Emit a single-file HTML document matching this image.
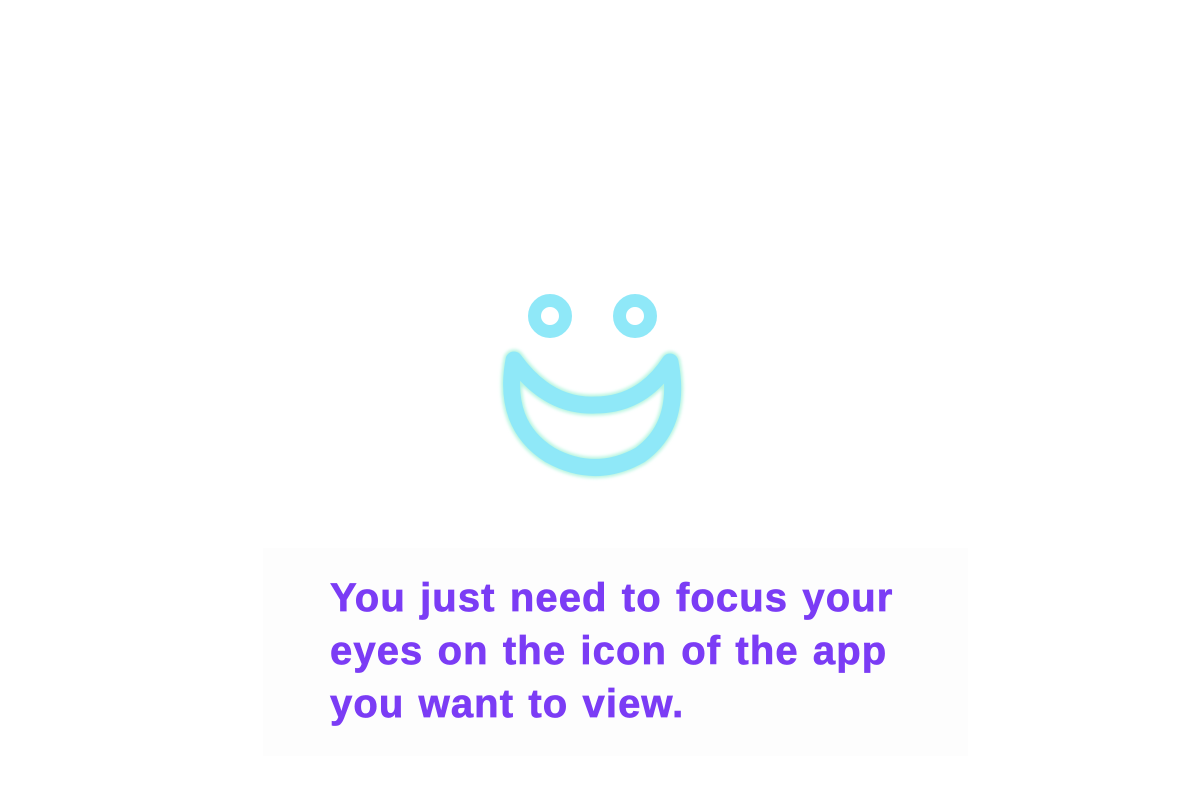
<!DOCTYPE html>
<html><head><style>
html,body{margin:0;padding:0;background:#fff;width:1200px;height:800px;overflow:hidden;position:relative}
.card{position:absolute;left:263px;top:548px;width:705px;height:208px;background:#fdfdfd}
.txt{position:absolute;left:330px;top:572px;font-family:"Liberation Sans",sans-serif;font-weight:bold;font-size:40px;line-height:53px;color:#7b3cf5;letter-spacing:1.1px;word-spacing:2px;white-space:nowrap;-webkit-text-stroke:0.7px #7b3cf5}
</style></head><body>
<div class="card"></div>
<svg width="1200" height="800" style="position:absolute;left:0;top:0">
<defs><filter id="g" x="-20%" y="-20%" width="140%" height="140%"><feGaussianBlur stdDeviation="1.5"/></filter></defs>
<g fill="none" stroke="#8fe8f8" stroke-linejoin="round" stroke-linecap="round">
<path d="M514,360 Q548,407 595,405 Q642,405 670,362 Q682,425 640,455 Q595,480 550,455 Q502,425 514,360 Z" stroke="#b8f5e0" stroke-width="21" filter="url(#g)"/>
<path d="M514,360 Q548,407 595,405 Q642,405 670,362 Q682,425 640,455 Q595,480 550,455 Q502,425 514,360 Z" stroke-width="17"/>
<circle cx="550" cy="316" r="15.5" stroke-width="13"/>
<circle cx="635" cy="316" r="15.5" stroke-width="13"/>
</g>
</svg>
<div class="txt">You just need to focus your<br>eyes on the icon of the app<br>you want to view.</div>
</body></html>
